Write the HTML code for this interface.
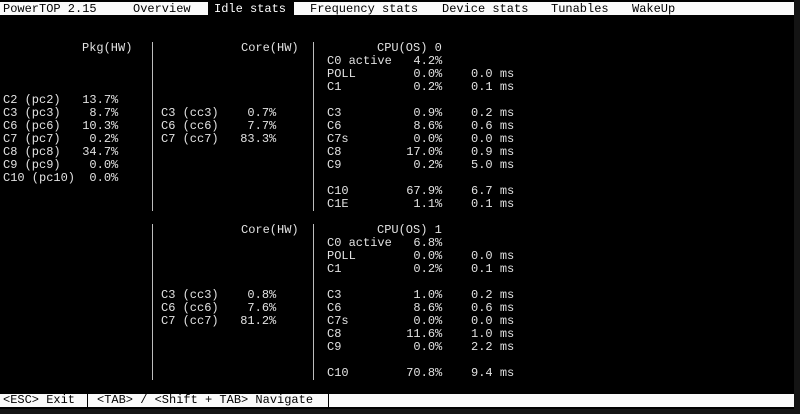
<!DOCTYPE html>
<html><head><meta charset="utf-8"><style>
html,body{margin:0;padding:0;background:#141414;width:800px;height:414px;overflow:hidden}
#t{position:absolute;left:0;top:0;width:794px;height:409px;background:#000}
.r{position:absolute;font-family:"Liberation Mono",monospace;font-size:12px;line-height:13px;height:13px;white-space:pre;color:#e2e2e2}
.bar{position:absolute;left:0;width:794px;height:13px;background:#fafafa}
.k{color:#000}
.p{position:absolute;width:1px;background:#bdbdbd}
</style></head><body>
<div id="t"></div>
<div class="bar" style="top:2px"></div>
<div style="position:absolute;left:208px;top:2px;width:86px;height:13px;background:#000"></div>
<div class="r k" style="top:3px;left:3px">PowerTOP 2.15</div>
<div class="r k" style="top:3px;left:133px">Overview</div>
<div class="r" style="top:3px;left:214px;color:#fff">Idle stats</div>
<div class="r k" style="top:3px;left:310px">Frequency stats</div>
<div class="r k" style="top:3px;left:442px">Device stats</div>
<div class="r k" style="top:3px;left:551px">Tunables</div>
<div class="r k" style="top:3px;left:632px">WakeUp</div>

<div class="p" style="left:152px;top:42px;height:169px"></div>
<div class="p" style="left:313px;top:42px;height:169px"></div>
<div class="p" style="left:152px;top:224px;height:156px"></div>
<div class="p" style="left:313px;top:224px;height:156px"></div>

<div class="r" style="top:42px;left:82px">Pkg(HW)</div>
<div class="r" style="top:42px;left:241px">Core(HW)</div>
<div class="r" style="top:42px;left:377px">CPU(OS) 0</div>

<div class="r" style="top:55px;left:327px">C0 active   4.2%</div>
<div class="r" style="top:68px;left:327px">POLL        0.0%    0.0 ms</div>
<div class="r" style="top:81px;left:327px">C1          0.2%    0.1 ms</div>

<div class="r" style="top:94px;left:3px">C2 (pc2)   13.7%</div>
<div class="r" style="top:107px;left:3px">C3 (pc3)    8.7%</div>
<div class="r" style="top:120px;left:3px">C6 (pc6)   10.3%</div>
<div class="r" style="top:133px;left:3px">C7 (pc7)    0.2%</div>
<div class="r" style="top:146px;left:3px">C8 (pc8)   34.7%</div>
<div class="r" style="top:159px;left:3px">C9 (pc9)    0.0%</div>
<div class="r" style="top:172px;left:3px">C10 (pc10)  0.0%</div>

<div class="r" style="top:107px;left:161px">C3 (cc3)    0.7%</div>
<div class="r" style="top:120px;left:161px">C6 (cc6)    7.7%</div>
<div class="r" style="top:133px;left:161px">C7 (cc7)   83.3%</div>

<div class="r" style="top:107px;left:327px">C3          0.9%    0.2 ms</div>
<div class="r" style="top:120px;left:327px">C6          8.6%    0.6 ms</div>
<div class="r" style="top:133px;left:327px">C7s         0.0%    0.0 ms</div>
<div class="r" style="top:146px;left:327px">C8         17.0%    0.9 ms</div>
<div class="r" style="top:159px;left:327px">C9          0.2%    5.0 ms</div>
<div class="r" style="top:185px;left:327px">C10        67.9%    6.7 ms</div>
<div class="r" style="top:198px;left:327px">C1E         1.1%    0.1 ms</div>

<div class="r" style="top:224px;left:241px">Core(HW)</div>
<div class="r" style="top:224px;left:377px">CPU(OS) 1</div>
<div class="r" style="top:237px;left:327px">C0 active   6.8%</div>
<div class="r" style="top:250px;left:327px">POLL        0.0%    0.0 ms</div>
<div class="r" style="top:263px;left:327px">C1          0.2%    0.1 ms</div>

<div class="r" style="top:289px;left:161px">C3 (cc3)    0.8%</div>
<div class="r" style="top:302px;left:161px">C6 (cc6)    7.6%</div>
<div class="r" style="top:315px;left:161px">C7 (cc7)   81.2%</div>

<div class="r" style="top:289px;left:327px">C3          1.0%    0.2 ms</div>
<div class="r" style="top:302px;left:327px">C6          8.6%    0.6 ms</div>
<div class="r" style="top:315px;left:327px">C7s         0.0%    0.0 ms</div>
<div class="r" style="top:328px;left:327px">C8         11.6%    1.0 ms</div>
<div class="r" style="top:341px;left:327px">C9          0.0%    2.2 ms</div>
<div class="r" style="top:367px;left:327px">C10        70.8%    9.4 ms</div>

<div class="bar" style="top:394px"></div>
<div style="position:absolute;left:87px;top:394px;width:1px;height:13px;background:#000"></div>
<div style="position:absolute;left:328px;top:394px;width:1px;height:13px;background:#000"></div>
<div class="r k" style="top:394px;left:3px">&lt;ESC&gt; Exit</div>
<div class="r k" style="top:394px;left:97px">&lt;TAB&gt; / &lt;Shift + TAB&gt; Navigate</div>
</body></html>
